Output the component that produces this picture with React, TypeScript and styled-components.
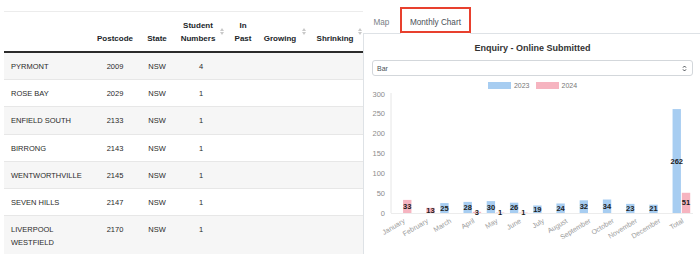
import React from 'react';
import styled, { createGlobalStyle } from 'styled-components';

const GlobalStyle = createGlobalStyle`
  html, body { margin: 0; padding: 0; background: #fff; }
  body {
    font-family: "Liberation Sans", Arial, Helvetica, sans-serif;
    color: #212529;
  }
`;

const Page = styled.div`
  display: flex;
  width: 700px;
  height: 254px;
  overflow: hidden;
`;

/* ---------- Left: table ---------- */

const LeftPane = styled.div`
  flex: none;
  width: 359px;
  padding: 11px 0 0 4px;
  overflow: hidden;
`;

const Table = styled.table`
  border-collapse: separate;
  border-spacing: 0;
  table-layout: fixed;
  width: 362px;
  border-top: 1px solid #ececec;
`;

const HeadRow = styled.tr`
  height: 41px;
`;

const Th = styled.th<{ $align?: string; $pr?: number; $pl?: number }>`
  position: relative;
  font-size: 8px;
  font-weight: 700;
  line-height: 13px;
  color: #212529;
  text-align: ${(p) => p.$align || 'center'};
  vertical-align: bottom;
  padding: 0 ${(p) => p.$pr ?? 0}px 6px ${(p) => p.$pl ?? 0}px;
  border-bottom: 2px solid #2b2b2b;
  white-space: nowrap;
`;

const SortIcon = styled.svg`
  position: absolute;
  right: 4px;
  top: 50%;
  margin-top: -4px;
  width: 4px;
  height: 7px;
`;

const BodyRow = styled.tr<{ $striped: boolean }>`
  background: ${(p) => (p.$striped ? '#f6f6f6' : '#ffffff')};
`;

const Td = styled.td<{ $align?: string }>`
  font-size: 7.5px;
  line-height: 13px;
  color: #2a2a2a;
  text-align: ${(p) => p.$align || 'center'};
  vertical-align: top;
  padding: 7px 6px 6.2px;
  border-bottom: 1px solid #e7e7e7;
`;

const NameTd = styled(Td)`
  padding-left: 7px;
  padding-right: 4px;
`;

/* ---------- Right: tabs + chart ---------- */

const RightPane = styled.div`
  flex: 1;
  min-width: 0;
  display: flex;
  flex-direction: column;
`;

const TabNav = styled.div`
  display: flex;
  height: 26px;
  padding-top: 7px;
  border-bottom: 1px solid #dee2e6;
`;

const Tab = styled.div<{ $active?: boolean }>`
  position: relative;
  box-sizing: border-box;
  height: ${(p) => (p.$active ? '27px' : '26px')};
  margin-bottom: ${(p) => (p.$active ? '-1px' : '0')};
  padding: 9px 9.5px 0;
  font-size: 8.2px;
  line-height: 12px;
  color: ${(p) => (p.$active ? '#495057' : '#7a8086')};
  background: #fff;
  border: 1px solid ${(p) => (p.$active ? '#dee2e6' : 'transparent')};
  border-bottom: none;
  border-radius: 3px 3px 0 0;
  ${(p) => (p.$active ? 'padding-left: 9px; padding-right: 9px;' : '')}
`;

const Highlight = styled.span`
  position: absolute;
  left: -1px;
  right: -1px;
  top: -1px;
  height: 26px;
  box-sizing: border-box;
  border: 2px solid #e8402e;
  pointer-events: none;
`;

const TabContent = styled.div`
  flex: 1;
  border-left: 1px solid #dee2e6;
  padding: 0 7px 0 8px;
  display: flex;
  flex-direction: column;
`;

const ChartTitle = styled.div`
  margin-top: 8px;
  font-size: 9px;
  line-height: 12px;
  font-weight: 700;
  text-align: center;
  color: #333;
`;

const SelectBox = styled.div`
  margin-top: 6px;
  box-sizing: border-box;
  height: 16px;
  display: flex;
  align-items: center;
  justify-content: space-between;
  padding: 0 5px 0 4px;
  border: 1px solid #d3d7db;
  border-radius: 3px;
  font-size: 7px;
  color: #495057;
`;

const Legend = styled.div`
  margin-top: 5px;
  height: 8px;
  display: flex;
  justify-content: center;
  align-items: center;
  gap: 6px;
`;

const LegendItem = styled.div`
  display: flex;
  align-items: center;
  gap: 3px;
  font-size: 7px;
  color: #777;
`;

const Swatch = styled.span<{ $color: string }>`
  display: inline-block;
  width: 23px;
  height: 7px;
  background: ${(p) => p.$color};
`;

const ChartSvg = styled.svg`
  display: block;
  overflow: visible;
`;

const BLUE = '#a7cdf1';
const PINK = '#f6b4c0';

const rows = [
  { name: 'PYRMONT', pc: '2009', st: 'NSW', n: '4' },
  { name: 'ROSE BAY', pc: '2029', st: 'NSW', n: '1' },
  { name: 'ENFIELD SOUTH', pc: '2133', st: 'NSW', n: '1' },
  { name: 'BIRRONG', pc: '2143', st: 'NSW', n: '1' },
  { name: 'WENTWORTHVILLE', pc: '2145', st: 'NSW', n: '1' },
  { name: 'SEVEN HILLS', pc: '2147', st: 'NSW', n: '1' },
  { name: 'LIVERPOOL WESTFIELD', pc: '2170', st: 'NSW', n: '1' },
];

const Sort = () => (
  <SortIcon viewBox="0 0 4 7">
    <path d="M0 3 L2 0 L4 3 Z" fill="#c9c9c9" />
    <path d="M0 4 L2 7 L4 4 Z" fill="#c9c9c9" />
  </SortIcon>
);

const months = [
  'January', 'February', 'March', 'April', 'May', 'June', 'July',
  'August', 'September', 'October', 'November', 'December', 'Total',
];
const d2023 = [0, 0, 25, 28, 30, 26, 19, 24, 32, 34, 23, 21, 262];
const d2024 = [33, 13, 0, 3, 1, 1, 0, 0, 0, 0, 0, 0, 51];

const X0 = 391;
const X1 = 693;
const Y0 = 213;
const YTOP = 94;
const SCALE = (Y0 - YTOP) / 300;
const CW = (X1 - X0) / 13;
const SLOT = (CW * 0.8) / 2;
const BW = SLOT * 0.9;

const Chart = () => {
  const ticks = [0, 50, 100, 150, 200, 250, 300];
  const bars: React.ReactNode[] = [];
  const labels: React.ReactNode[] = [];
  months.forEach((m, i) => {
    const cx = X0 + CW * (i + 0.5);
    [d2023[i], d2024[i]].forEach((v, k) => {
      if (!v) return;
      const x = k === 0 ? cx - SLOT + (SLOT - BW) / 2 : cx + (SLOT - BW) / 2;
      const h = v * SCALE;
      bars.push(
        <rect key={`b${i}-${k}`} x={x} y={Y0 - h} width={BW} height={h} fill={k === 0 ? BLUE : PINK} />
      );
      labels.push(
        <text
          key={`l${i}-${k}`}
          x={x + BW / 2}
          y={Y0 - h / 2}
          textAnchor="middle"
          dominantBaseline="central"
          fontSize="7.5"
          fontWeight="700"
          fill="#1c1c1c"
        >
          {v}
        </text>
      );
    });
  });
  return (
    <ChartSvg width="321" height="165" viewBox="372 89 321 165">
      {ticks.map((t) => (
        <text
          key={t}
          x={385}
          y={Y0 - t * SCALE}
          textAnchor="end"
          dominantBaseline="central"
          fontSize="7.5"
          fill="#8c8c8c"
        >
          {t}
        </text>
      ))}
      <line x1={X0} y1={YTOP - 1} x2={X0} y2={Y0} stroke="#e6e6e6" strokeWidth="1" />
      <line x1={X0} y1={Y0 + 0.5} x2={X1} y2={Y0 + 0.5} stroke="#ececec" strokeWidth="1" />
      {bars}
      {labels}
      {months.map((m, i) => {
        const cx = X0 + CW * (i + 0.5);
        return (
          <text
            key={m}
            transform={`translate(${cx + 1.5},${220}) rotate(-31)`}
            textAnchor="end"
            dominantBaseline="central"
            fontSize="7"
            fill="#9a9a9a"
          >
            {m}
          </text>
        );
      })}
    </ChartSvg>
  );
};

export default function App() {
  return (
    <>
      <GlobalStyle />
      <Page>
        <LeftPane>
          <Table>
            <colgroup>
              <col style={{ width: 86 }} />
              <col style={{ width: 50 }} />
              <col style={{ width: 34 }} />
              <col style={{ width: 54 }} />
              <col style={{ width: 30 }} />
              <col style={{ width: 52 }} />
              <col style={{ width: 56 }} />
            </colgroup>
            <thead>
              <HeadRow>
                <Th $align="left" />
                <Th>Postcode</Th>
                <Th>State</Th>
                <Th $pr={6}>
                  Student
                  <br />
                  Numbers
                  <Sort />
                </Th>
                <Th>
                  In
                  <br />
                  Past
                </Th>
                <Th $pr={8}>
                  Growing
                  <Sort />
                </Th>
                <Th $pl={4} $pr={10}>
                  Shrinking
                  <Sort />
                </Th>
              </HeadRow>
            </thead>
            <tbody>
              {rows.map((r, i) => (
                <BodyRow key={r.name} $striped={i % 2 === 0}>
                  <NameTd $align="left">{r.name}</NameTd>
                  <Td>{r.pc}</Td>
                  <Td>{r.st}</Td>
                  <Td>{r.n}</Td>
                  <Td />
                  <Td />
                  <Td />
                </BodyRow>
              ))}
            </tbody>
          </Table>
        </LeftPane>
        <RightPane>
          <TabNav>
            <Tab>Map</Tab>
            <Tab $active>
              Monthly Chart
              <Highlight />
            </Tab>
          </TabNav>
          <TabContent>
            <ChartTitle>Enquiry - Online Submitted</ChartTitle>
            <SelectBox>
              <span>Bar</span>
              <svg width="5" height="7" viewBox="0 0 5 7">
                <path d="M1 2.6 L2.5 1 L4 2.6" fill="none" stroke="#343a40" strokeWidth="0.9" />
                <path d="M1 4.4 L2.5 6 L4 4.4" fill="none" stroke="#343a40" strokeWidth="0.9" />
              </svg>
            </SelectBox>
            <Legend>
              <LegendItem>
                <Swatch $color={BLUE} />
                2023
              </LegendItem>
              <LegendItem>
                <Swatch $color={PINK} />
                2024
              </LegendItem>
            </Legend>
            <Chart />
          </TabContent>
        </RightPane>
      </Page>
    </>
  );
}
